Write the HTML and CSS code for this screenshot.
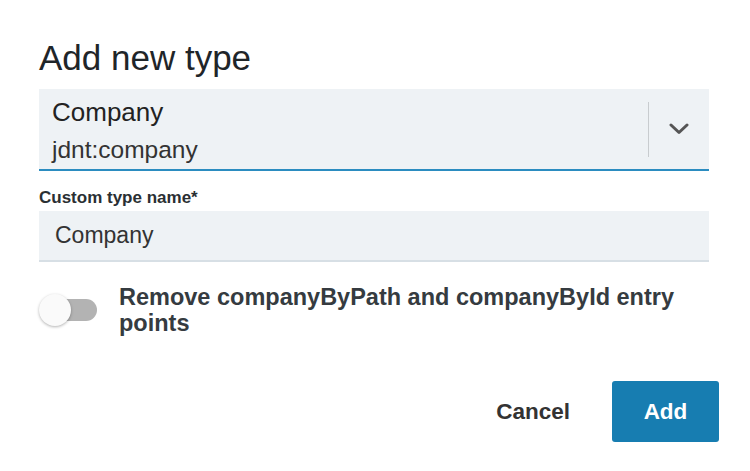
FILE: index.html
```html
<!DOCTYPE html>
<html>
<head>
<meta charset="utf-8">
<link rel="stylesheet" href="styles.css">
</head>
<body>
<div class="dialog">
  <h1 class="title">Add new type</h1>
  <div class="select">
    <div class="select-value">
      <div class="select-main">Company</div>
      <div class="select-sub">jdnt:company</div>
    </div>
    <div class="select-sep"></div>
    <div class="select-arrow">
      <svg width="20" height="12" viewBox="0 0 20 12"><path d="M2 2 L10 9.5 L18 2" fill="none" stroke="#555" stroke-width="3" stroke-linecap="round" stroke-linejoin="round"/></svg>
    </div>
  </div>
  <div class="field-label">Custom type name*</div>
  <div class="input">Company</div>
  <div class="toggle-row">
    <div class="switch"><span class="track"></span><span class="knob"></span></div>
    <div class="toggle-text">Remove companyByPath and companyById entry points</div>
  </div>
  <div class="footer">
    <button class="btn-cancel">Cancel</button>
    <button class="btn-add">Add</button>
  </div>
</div>
</body>
</html>
```
FILE: styles.css
```css
html, body {
  margin: 0;
  padding: 0;
  background: #fff;
}
body {
  font-family: "Liberation Sans", Arial, sans-serif;
  color: #222;
}
.dialog {
  padding: 37px 41px 0 39px;
}
.title {
  margin: 0;
  font-size: 35px;
  line-height: 42px;
  font-weight: normal;
  color: #1f2529;
}
.select {
  margin-top: 10px;
  height: 80px;
  background: #eef2f5;
  border-bottom: 2px solid #2b8cc0;
  display: flex;
  align-items: stretch;
}
.select-value {
  flex: 1;
  padding: 3px 0 0 13px;
}
.select-main {
  font-size: 26px;
  line-height: 40px;
  color: #222;
}
.select-sub {
  font-size: 24.5px;
  line-height: 36px;
  color: #333;
}
.select-sep {
  width: 1px;
  background: #c8cccf;
  margin: 13px 0 12px;
}
.select-arrow {
  width: 60px;
  display: flex;
  align-items: center;
  justify-content: center;
}
.field-label {
  margin-top: 17px;
  font-size: 17px;
  line-height: 20px;
  font-weight: bold;
  color: #2a2f33;
}
.input {
  margin-top: 3px;
  height: 49px;
  background: #eef2f5;
  border-bottom: 2px solid #d7dfe5;
  display: flex;
  align-items: center;
  padding-left: 16px;
  font-size: 23px;
  color: #333;
}
.toggle-row {
  margin-top: 22px;
  display: flex;
  align-items: flex-start;
}
.switch {
  position: relative;
  width: 58px;
  height: 34px;
  margin-top: 9px;
  margin-right: 22px;
  flex: none;
}
.track {
  position: absolute;
  left: 4px;
  top: 6px;
  width: 54px;
  height: 22px;
  border-radius: 11px;
  background: #b3b3b3;
}
.knob {
  position: absolute;
  left: 0;
  top: 1px;
  width: 32px;
  height: 32px;
  border-radius: 50%;
  background: #fafafa;
  box-shadow: 0 1px 3px rgba(0,0,0,0.3);
}
.toggle-text {
  font-size: 23.5px;
  line-height: 26px;
  font-weight: bold;
  color: #353b40;
}
.footer {
  margin-top: 45px;
  margin-right: -10px;
  display: flex;
  justify-content: flex-end;
  align-items: center;
}
.btn-cancel {
  background: none;
  border: none;
  font-family: inherit;
  font-size: 22.5px;
  font-weight: bold;
  color: #333;
  padding: 0 20px;
  margin-right: 22px;
  height: 61px;
}
.btn-add {
  width: 107px;
  height: 61px;
  background: #177db1;
  border: none;
  border-radius: 3px;
  color: #fff;
  font-family: inherit;
  font-size: 22.5px;
  font-weight: bold;
}
```
